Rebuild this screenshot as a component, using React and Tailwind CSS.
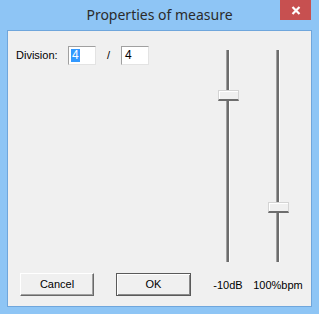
export default function App() {
  const sliders = [
    { label: '-10dB', thumbTop: 40 },
    { label: '100%bpm', thumbTop: 152 },
  ]

  return (
    <div className="w-[319px] h-[314px] bg-[#8ec5f5] flex flex-col px-[7px] pb-[7px] font-['Liberation_Sans',Arial,sans-serif] text-[11px] text-black">
      {/* Title bar */}
      <div className="h-[30px] flex items-start shrink-0 -mx-[7px]">
        <div className="w-[39px]" />
        <div className="flex-1 h-[30px] flex items-center justify-center pb-[1px]">
          <span className="font-['Noto_Sans',sans-serif] text-[14px] text-[#2b2b2b] leading-none">Properties of measure</span>
        </div>
        <div className="w-[31px] h-[20px] bg-[#c75050] mr-[8px] flex items-center justify-center">
          <svg width="10" height="9" viewBox="0 0 10 9">
            <path d="M1.5 1 L8.5 8 M8.5 1 L1.5 8" stroke="white" strokeWidth="2.2" />
          </svg>
        </div>
      </div>

      {/* Client area */}
      <div className="flex-1 border border-[#6fa6dc] bg-[#f0f0f0] flex">
        <div className="flex-1 flex flex-col justify-between pt-[15px] pb-[10px]">
          <div className="flex items-center pl-[8px] h-[19px]">
            <span className="w-[52px]">Division:</span>
            <div className="w-[28px] h-[19px] bg-white border border-t-[#a0a0a0] border-l-[#a0a0a0] border-b-[#e3e3e3] border-r-[#e3e3e3] flex items-center pl-[2px]">
              <span className="bg-[#3399ff] text-white px-[1px] leading-[13px] text-[12px]">4</span>
            </div>
            <span className="w-[25px] text-center">/</span>
            <div className="w-[28px] h-[19px] bg-white border border-t-[#a0a0a0] border-l-[#a0a0a0] border-b-[#e3e3e3] border-r-[#e3e3e3] flex items-center pl-[3px]">
              <span className="leading-[13px] text-[12px]">4</span>
            </div>
          </div>
          <div className="flex gap-[22px] pl-[12px]">
            <button className="w-[74px] h-[23px] bg-[#f0f0f0] border border-t-white border-l-white border-b-[#696969] border-r-[#696969] shadow-[inset_-1px_-1px_0_#a0a0a0] flex items-center justify-center pb-[1px]">
              Cancel
            </button>
            <button className="w-[75px] h-[23px] bg-[#f0f0f0] border border-[#5a5a5a] shadow-[inset_1px_1px_0_white,inset_-1px_-1px_0_#8a8a8a] flex items-center justify-center pb-[1px]">
              OK
            </button>
          </div>
        </div>

        {/* Sliders */}
        <div className="flex pr-[8px] pt-[19px]">
          {sliders.map(s => (
            <div key={s.label} className="w-[50px] flex flex-col items-center">
              <div className="relative w-[21px] h-[212px] flex justify-center">
                <div className="w-[4px] h-full flex">
                  <div className="w-[1px] bg-[#a0a0a0]" />
                  <div className="w-[2px] bg-[#6d6d6d]" />
                  <div className="w-[1px] bg-white" />
                </div>
                <div
                  className="absolute left-0 w-[21px] h-[11px] bg-[#f0f0f0] border border-[#d4d4d4] border-b-2 border-b-[#6d6d6d] shadow-[inset_1px_1px_0_white]"
                  style={{ top: s.thumbTop }}
                />
              </div>
              <span className="mt-[15px] whitespace-nowrap">{s.label}</span>
            </div>
          ))}
        </div>
      </div>
    </div>
  )
}
